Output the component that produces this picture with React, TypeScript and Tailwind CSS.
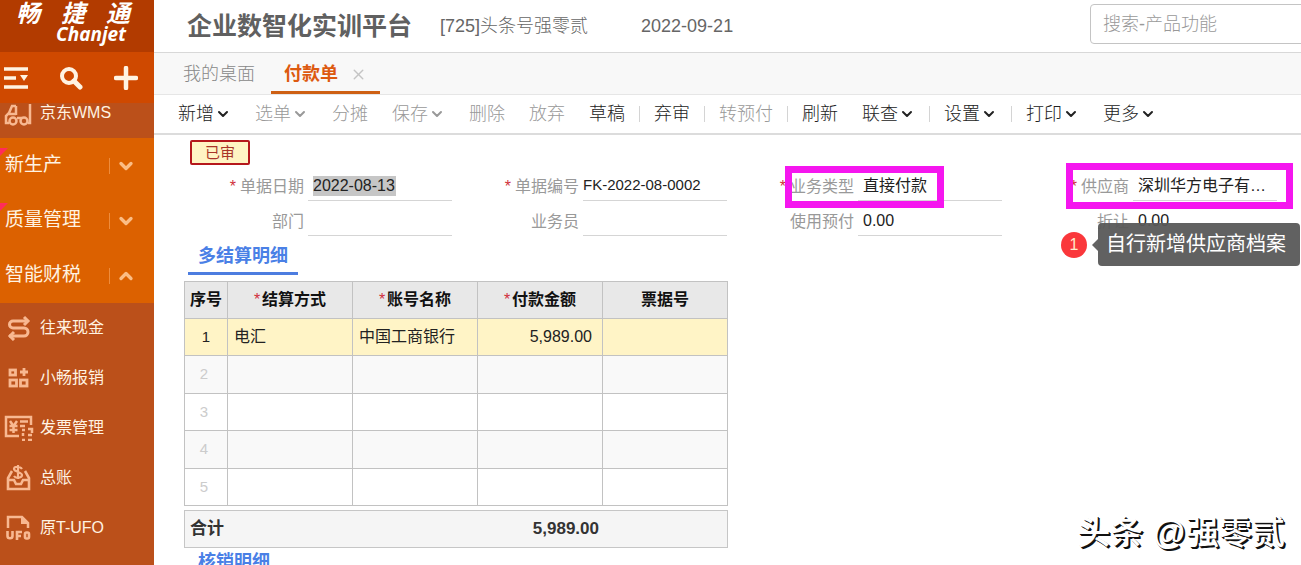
import React, { FunctionComponent, ReactNode } from 'react';
import { ChevronDown, ChevronUp, X } from 'lucide-react';

const TruckIcon = () => (
  <svg width="28" height="24" viewBox="0 0 28 24" fill="none" stroke="currentColor" strokeWidth="2.5">
    <path d="M26 1v19h-2M12 3v9M12 3H8l-3 7-3 3v7h3M5 11h7M13 15h5" />
    <circle cx="9" cy="18" r="3.5" />
    <circle cx="20" cy="18" r="3.5" />
  </svg>
);

const CashIcon = () => (
  <svg width="28" height="26" viewBox="0 0 28 26" fill="none" stroke="currentColor" strokeWidth="3">
    <path d="M24 6H9a3.500 3.500 0 0 0 0 7h11a3.500 3.500 0 0 1 0 8H5" />
    <path d="M20 2l4 4-4 4M10 17l-4 4 4 4" />
  </svg>
);

const ReimburseIcon = () => (
  <svg width="28" height="26" viewBox="0 0 28 26" fill="none" stroke="currentColor" strokeWidth="2.8">
    <rect x="6" y="5" width="5.500" height="5" />
    <rect x="6" y="15" width="6.500" height="6" />
    <rect x="16.500" y="15" width="6.500" height="6" />
    <path d="M20 3v8M16 7h8" />
  </svg>
);

const InvoiceIcon = () => (
  <svg width="30" height="26" viewBox="0 0 30 26" fill="none" stroke="currentColor" strokeWidth="2.5">
    <path d="M27 10V2H2v19h13" />
    <path d="M6 6l3.500 5L13 6M5.500 11h8M5.500 15h8M9.500 11v7M16 6.500h8M16 11h5M18 15h3M24 14h4v4M19 18v3M24 20h4M18 25h3M24 25h4" />
  </svg>
);

const LedgerIcon = () => (
  <svg width="28" height="26" viewBox="0 0 28 26" fill="none" stroke="currentColor" strokeWidth="2.6">
    <path d="M8 6L4 13v11h21V13l-4-7M4 15h6l2 4h5l2-4h6" />
    <path d="M18 4c-2-3-8-3-8 0s8 3 8 6-6 4-8 1M14 0v14" strokeWidth="2.2" />
  </svg>
);

const UfoIcon = () => (
  <svg width="28" height="26" viewBox="0 0 28 26" fill="none" stroke="currentColor" strokeWidth="2.5">
    <path d="M4 13V2h14l6 6v5" />
    <path d="M17 2v7h7z" fill="currentColor" stroke="none" />
    <path d="M3.500 16v5c0 3 5 3 5 0v-5M13 25v-8h5M13 21h4" strokeWidth="2.6" />
    <rect x="21" y="17.500" width="4" height="6" rx="1.500" strokeWidth="2.6" />
  </svg>
);

const menus = [
  { name: '新生产', isNew: true },
  { name: '质量管理', isNew: true },
  { name: '智能财税', open: true },
];

const subMenus = [
  { name: '往来现金', icon: <CashIcon /> },
  { name: '小畅报销', icon: <ReimburseIcon /> },
  { name: '发票管理', icon: <InvoiceIcon /> },
  { name: '总账', icon: <LedgerIcon /> },
  { name: '原T-UFO', icon: <UfoIcon /> },
];

const tools: { name: string; arrow?: boolean; disabled?: boolean; sep?: boolean }[] = [
  { name: '新增', arrow: true },
  { name: '选单', arrow: true, disabled: true },
  { name: '分摊', disabled: true },
  { name: '保存', arrow: true, disabled: true },
  { name: '删除', disabled: true },
  { name: '放弃', disabled: true },
  { name: '草稿', sep: true },
  { name: '弃审', sep: true },
  { name: '转预付', disabled: true, sep: true },
  { name: '刷新' },
  { name: '联查', arrow: true, sep: true },
  { name: '设置', arrow: true, sep: true },
  { name: '打印', arrow: true },
  { name: '更多', arrow: true },
];

const columns = [
  { name: '结算方式', required: true },
  { name: '账号名称', required: true },
  { name: '付款金额', required: true },
  { name: '票据号' },
];

const rows = [
  ['电汇', '中国工商银行', '5,989.00', ''],
  ['', '', '', ''],
  ['', '', '', ''],
  ['', '', '', ''],
  ['', '', '', ''],
];

const Sidebar: FunctionComponent = () => (
  <aside className="w-[154px] shrink-0 bg-[#bb501a] text-[#fff3e2]">
    <div className="h-[52px] bg-[#b23b00] pl-4 pr-6 text-white italic font-bold">
      <div className="flex justify-between text-2xl leading-7">
        <span>畅</span>
        <span>捷</span>
        <span>通</span>
      </div>
      <div className="pr-1 text-right text-[19px] leading-3 font-['Open_Sans','Noto_Sans',sans-serif]">
        Chanjet
      </div>
    </div>
    <div className="h-[51px] flex items-center justify-between pl-1 pr-4 bg-[#cf4900]">
      <button aria-label="菜单">
        <svg width="24" height="24" viewBox="0 0 24 24" fill="none" stroke="currentColor" strokeWidth="3.5">
          <path d="M0 3h24M0 12h12M0 21h24" />
          <path d="M16 9h8l-4 6z" fill="currentColor" stroke="none" />
        </svg>
      </button>
      <button aria-label="搜索">
        <svg width="24" height="24" viewBox="0 0 24 24" fill="none" stroke="currentColor" strokeWidth="4">
          <circle cx="10" cy="10" r="7" />
          <path d="M15 15l6 6" strokeWidth="5" strokeLinecap="round" />
        </svg>
      </button>
      <button aria-label="新建">
        <svg width="24" height="24" viewBox="0 0 24 24" fill="none" stroke="currentColor" strokeWidth="4.5">
          <path d="M12 2v20M2 12h20" strokeLinecap="round" />
        </svg>
      </button>
    </div>
    <a href="#wms" className="h-[35px] flex items-start">
      <span className="w-10 pl-1 text-[#f8b891]">
        <TruckIcon />
      </span>
      <span className="text-base leading-5">京东WMS</span>
    </a>
    {menus.map((m) => (
      <button
        key={m.name}
        className="relative w-full h-[55px] flex items-center pl-[5px] pr-[18px] bg-[#dc6100] text-[19px]"
      >
        {m.isNew && (
          <span className="absolute left-0 top-[10px] border-t-8 border-r-8 border-t-[#ff2c5a] border-r-transparent" />
        )}
        {m.name}
        <span className="ml-auto h-4 pl-1.5 flex items-center border-l border-[#ee8c3c] text-[#fbbd85]">
          {m.open ? (
            <ChevronUp size={20} strokeWidth={4} />
          ) : (
            <ChevronDown size={20} strokeWidth={4} />
          )}
        </span>
      </button>
    ))}
    {subMenus.map((m) => (
      <a key={m.name} href="#sub" className="h-[50px] flex items-center text-base">
        <span className="w-10 pl-1 text-[#f8b891]">{m.icon}</span>
        {m.name}
      </a>
    ))}
  </aside>
);

const Field: FunctionComponent<any> = ({
  id,
  label,
  required,
  value,
  inputClass = 'w-full pl-[5px] text-base',
  children,
}: {
  id: string;
  label: string;
  required?: boolean;
  value?: string;
  inputClass?: string;
  children?: ReactNode;
}) => (
  <div className="relative h-[35px] flex items-end">
    <label
      htmlFor={id}
      className="w-[120px] h-7 shrink-0 text-right text-base leading-7 text-[#999]"
    >
      {required && <span className="mr-1 text-[#d0313b]">*</span>}
      {label}
    </label>
    <div className="ml-1 w-36 h-7 pb-0.5 flex items-center border-b border-[#d5d5d5]">
      <input
        id={id}
        defaultValue={value}
        className={`${inputClass} h-5 min-w-0 bg-transparent text-[#222] text-ellipsis outline-none`}
      />
    </div>
    {children}
  </div>
);

const App: FunctionComponent = () => (
  <div className="flex h-screen overflow-hidden bg-white text-[#333] font-['Liberation_Sans','Noto_Sans_CJK_SC',sans-serif]">
    <Sidebar />
    <main className="relative flex-1 min-w-0">
      <header className="h-[53px] flex items-center pl-[33px] overflow-hidden border-b border-[#d8d8d8] text-lg text-[#666] whitespace-nowrap">
        <h1 className="text-[25px] font-bold text-[#606060]">企业数智化实训平台</h1>
        <span className="ml-7 font-light">[725]头条号强零贰</span>
        <span className="ml-[53px]">2022-09-21</span>
        <input
          aria-label="搜索"
          placeholder="搜索-产品功能"
          className="ml-auto -mr-2 w-[219px] h-10 mb-1 px-3 rounded border border-[#c4c4c4] font-light placeholder:text-[#999] outline-none"
        />
      </header>

      <nav className="h-[42px] flex pl-[29px] bg-[#f8f8f8] border-b border-[#e6e6e6] text-lg">
        <button className="pr-4 font-light text-[#888]">我的桌面</button>
        <div className="flex items-center px-[13px] pt-1 border-b-3 border-[#ce6014]">
          <button className="font-bold text-[#dd5a10]">付款单</button>
          <button aria-label="关闭" className="ml-3 text-[#c4c4c4]">
            <X size={17} strokeWidth={2} />
          </button>
        </div>
      </nav>

      <div className="h-10 flex items-center pl-3 pb-px border-b-2 border-[#dcdcdc] text-lg font-light whitespace-nowrap">
        {tools.map((t) => (
          <React.Fragment key={t.name}>
            <button
              disabled={t.disabled}
              className="flex items-center px-3 text-[#222] disabled:text-[#999]"
            >
              {t.name}
              {t.arrow && <ChevronDown size={16} strokeWidth={3} className="ml-px" />}
            </button>
            {t.sep && <span className="mx-0.5 w-px h-4 bg-[#d4d4d4]" />}
          </React.Fragment>
        ))}
      </div>

      <section className="pt-[5px] pl-[30px] pr-[17px]">
        <div className="ml-1.5 w-[60px] h-[25px] rounded-xs border-2 border-[#b5171b] bg-[#fff4c3] text-center text-[15px] leading-[22px] text-[#a83428]">
          已审
        </div>

        <form className="mt-px grid grid-cols-4">
          <Field
            id="date"
            label="单据日期"
            required
            value="2022-08-13"
            inputClass="ml-[5px] w-[83px] text-base bg-[#c6c6c6]!"
          />
          <Field
            id="code"
            label="单据编号"
            required
            value="FK-2022-08-0002"
            inputClass="w-full text-[15px]"
          />
          <Field id="type" label="业务类型" required value="直接付款">
            <div className="absolute left-[51px] top-0 w-[159px] h-[42px] border-7 border-[#f516ef] pointer-events-none" />
          </Field>
          <Field id="supplier" label="供应商" required value="深圳华方电子有…">
            <div className="absolute left-[57px] -top-[3px] w-[227px] h-[46px] border-7 border-[#f516ef] pointer-events-none" />
          </Field>
          <Field id="dept" label="部门" />
          <Field id="clerk" label="业务员" />
          <Field id="prepay" label="使用预付" value="0.00" />
          <Field id="discount" label="折让" value="0.00">
            <div className="absolute left-[52px] top-[22px] flex items-center text-xl whitespace-nowrap">
              <span className="w-[26px] h-[26px] rounded-full bg-[#fa373b] text-center text-base leading-[25px] text-[#ffe9c8]">
                1
              </span>
              <span className="ml-[5px] border-y-6 border-r-6 border-y-transparent border-r-[#636363]" />
              <span className="pl-2 pr-3.5 h-[43px] rounded bg-[#595959]/95 leading-[43px] text-white">
                自行新增供应商档案
              </span>
            </div>
          </Field>
        </form>

        <div className="mt-1 flex">
          <h2 className="ml-1 px-[10px] h-[35px] border-b-3 border-[#4d7de0] text-lg leading-[32px] font-bold text-[#4a80e6]">
            多结算明细
          </h2>
        </div>

        <table className="mt-1.5 w-[544px] table-fixed border-collapse text-base">
          <thead>
            <tr className="h-[37px] bg-[#e8e8e8] text-[#111]">
              <th className="w-[43px] p-0 border border-[#c2c2c2]">序号</th>
              {columns.map((c) => (
                <th key={c.name} className="p-0 border border-[#c2c2c2]">
                  {c.required && <span className="mr-0.5 font-normal text-[#d0313b]">*</span>}
                  {c.name}
                </th>
              ))}
            </tr>
          </thead>
          <tbody>
            {rows.map((cells, i) => (
              <tr
                key={i}
                className="h-[37px] even:h-[38px] odd:bg-white even:bg-[#f9f9f9] first:bg-[#fff4c6]! text-[#222]"
              >
                <td
                  className={`p-0 border border-[#c2c2c2] text-center text-[15px] ${
                    i === 0 ? '' : 'pr-1 text-[#ccc]'
                  }`}
                >
                  {i + 1}
                </td>
                {cells.map((cell, j) => (
                  <td
                    key={j}
                    className={`py-0 border border-[#c2c2c2] ${
                      j === 2 ? 'pr-[10px] text-right' : 'pl-1.5'
                    }`}
                  >
                    {cell}
                  </td>
                ))}
              </tr>
            ))}
          </tbody>
        </table>

        <div className="mt-1 w-[544px] h-[38px] flex items-center justify-between pl-[5px] pr-32 border border-[#c6c6c6] bg-[#f5f5f5] text-[17px] font-bold">
          <span>合计</span>
          <span>5,989.00</span>
        </div>

        <h2 className="ml-1 px-[10px] text-lg leading-7 font-bold text-[#4a80e6]">核销明细</h2>
      </section>

      <div className="absolute right-4 bottom-2 text-[33px] leading-[48px] font-medium text-white whitespace-nowrap [text-shadow:1px_1px_0_#111,2px_2px_0_#111]">
        头条 @强零贰
      </div>
    </main>
  </div>
);

export default App;
